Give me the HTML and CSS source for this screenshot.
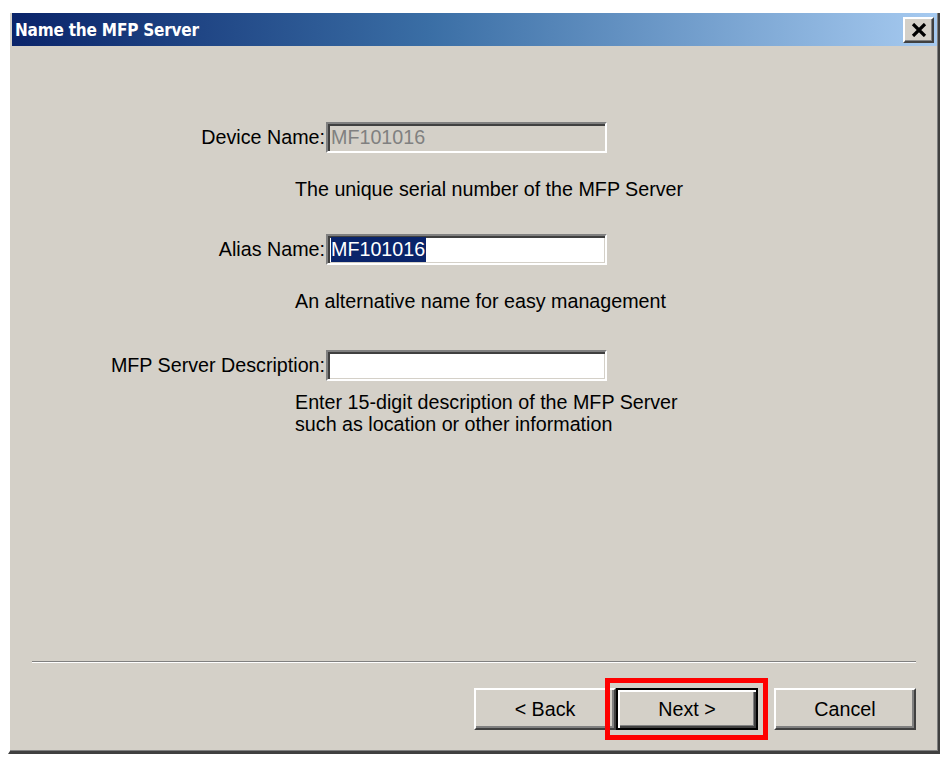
FILE: index.html
```html
<!DOCTYPE html>
<html>
<head>
<meta charset="utf-8">
<title>Name the MFP Server</title>
<link rel="stylesheet" href="styles.css">
</head>
<body>
<div class="window">
  <div class="titlebar">
    <span class="title">Name the MFP Server</span>
    <div class="close">
      <svg width="16" height="14" viewBox="0 0 16 14"><path d="M2 1 L14 13 M14 1 L2 13" stroke="#000" stroke-width="3.2" fill="none"/></svg>
    </div>
  </div>
  <div class="body">
    <div class="form">
      <div class="row row-device">
        <span class="label">Device Name:</span>
        <div class="field field-disabled"><span class="value">MF101016</span></div>
      </div>
      <div class="help help-1">The unique serial number of the MFP Server</div>
      <div class="row row-alias">
        <span class="label">Alias Name:</span>
        <div class="field"><span class="value selected">MF101016</span></div>
      </div>
      <div class="help help-2">An alternative name for easy management</div>
      <div class="row row-desc">
        <span class="label">MFP Server Description:</span>
        <div class="field"></div>
      </div>
      <div class="help help-3">Enter 15-digit description of the MFP Server<br>such as location or other information</div>
    </div>
    <div class="footer">
      <div class="separator"></div>
      <div class="buttons">
        <div class="btn">&lt; Back</div>
        <div class="btn btn-default highlighted">Next &gt;</div>
        <div class="btn btn-cancel">Cancel</div>
      </div>
    </div>
  </div>
</div>
</body>
</html>
```
FILE: styles.css
```css
html, body {
  margin: 0;
  padding: 0;
  background: #ffffff;
}

body {
  font-family: "Liberation Sans", Arial, sans-serif;
  font-size: 19.7px;
  color: #000;
}

.window {
  margin: 13px 0 0 8px;
  width: 932px;
  height: 741px;
  box-sizing: border-box;
  background: #d4d0c8;
  border-left: 2px solid #ffffff;
  border-right: 2px solid #404040;
  border-bottom: 3px solid #404040;
  padding: 0 1px 0 2px;
  box-shadow: inset -1px -1px 0 #808080;
  display: flex;
  flex-direction: column;
}

.titlebar {
  height: 33px;
  flex: none;
  display: flex;
  align-items: center;
  justify-content: space-between;
  background: linear-gradient(to right, #0a246a 0%, #3a6ea5 45%, #a6caf0 100%);
  padding: 0 3px 0 3px;
}

.title {
  font-family: "DejaVu Sans", Verdana, sans-serif;
  font-stretch: condensed;
  font-weight: bold;
  font-size: 17px;
  color: #ffffff;
  letter-spacing: -0.2px;
}

.close {
  width: 31px;
  height: 26px;
  box-sizing: border-box;
  background: #d4d0c8;
  border-top: 2px solid #ffffff;
  border-left: 2px solid #ffffff;
  border-right: 2px solid #404040;
  border-bottom: 2px solid #404040;
  box-shadow: inset -1px -1px 0 #808080;
  display: flex;
  align-items: center;
  justify-content: center;
}

.body {
  flex: 1;
  display: flex;
  flex-direction: column;
}

.form {
  padding-top: 76px;
}

.row {
  display: grid;
  grid-template-columns: 314px 281px;
  align-items: center;
  height: 31px;
}

.label {
  justify-self: end;
  padding-right: 1px;
  white-space: nowrap;
}

.field {
  height: 31px;
  box-sizing: border-box;
  background: #ffffff;
  border-top: 2px solid #808080;
  border-left: 2px solid #808080;
  border-right: 2px solid #ffffff;
  border-bottom: 2px solid #ffffff;
  box-shadow: inset 2px 2px 0 #404040, inset -1px -1px 0 #d4d0c8;
  display: flex;
  align-items: center;
  padding-left: 3px;
}

.field-disabled {
  background: #d4d0c8;
}

.field-disabled .value {
  color: #808080;
}

.value {
  line-height: 25px;
  white-space: nowrap;
}

.selected {
  background: #0a246a;
  color: #ffffff;
  display: inline-block;
  height: 25px;
  padding-right: 1px;
}

.help {
  margin-left: 283px;
  line-height: 22px;
  white-space: nowrap;
}

.help-1 {
  margin-top: 25px;
  margin-bottom: 34px;
}

.help-2 {
  margin-top: 25px;
  margin-bottom: 38px;
}

.help-3 {
  margin-top: 10px;
  line-height: 22px;
}

.footer {
  margin-top: auto;
  padding: 0 21px 21px 20px;
}

.separator {
  height: 1px;
  border-top: 1px solid #808080;
  background: #ffffff;
}

.buttons {
  margin-top: 25px;
  display: flex;
  justify-content: flex-end;
}

.btn {
  width: 142px;
  height: 42px;
  box-sizing: border-box;
  background: #d4d0c8;
  border-top: 2px solid #ffffff;
  border-left: 2px solid #ffffff;
  border-right: 2px solid #404040;
  border-bottom: 2px solid #404040;
  box-shadow: inset -2px -2px 0 #808080;
  display: flex;
  align-items: center;
  justify-content: center;
  position: relative;
}

.btn-default {
  border: 2px solid #000000;
  box-shadow: inset 2px 2px 0 #ffffff, inset -2px -2px 0 #404040, inset -3px -3px 0 #808080;
}

.btn-cancel {
  margin-left: 16px;
}

.highlighted::after {
  content: "";
  position: absolute;
  top: -12px;
  bottom: -12px;
  left: -13px;
  right: -12px;
  border: 5px solid #ff0000;
  pointer-events: none;
}
```
